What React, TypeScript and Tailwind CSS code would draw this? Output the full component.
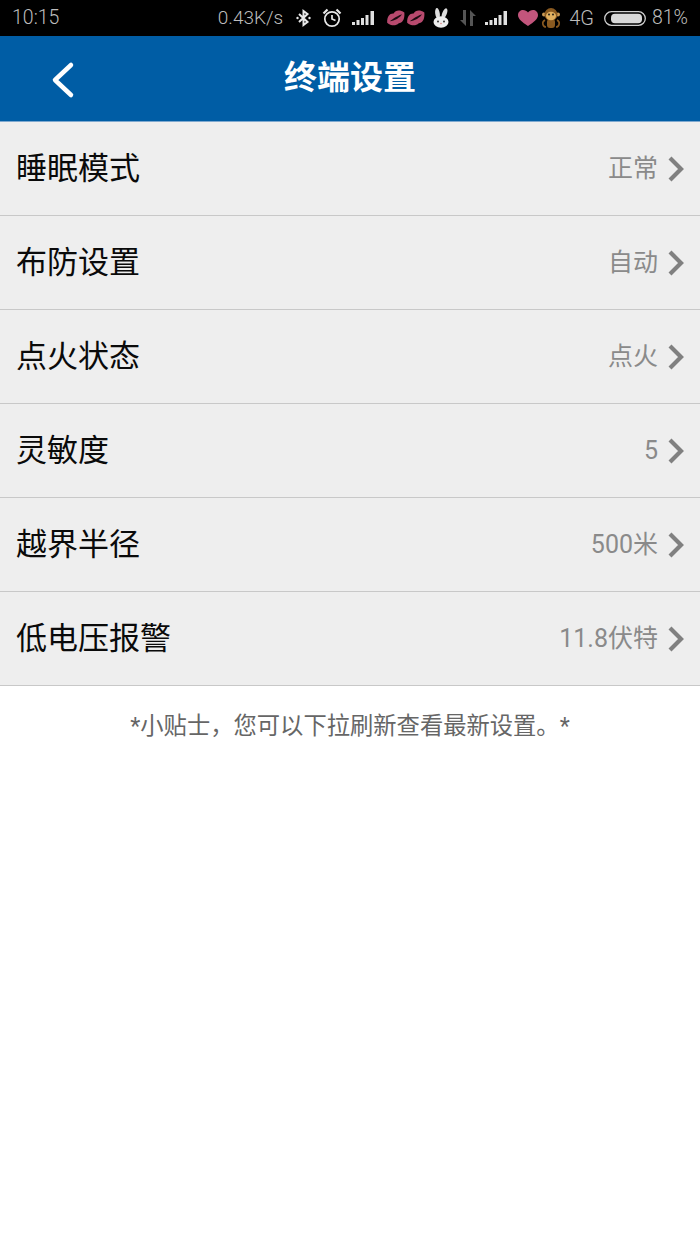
const cjk = { fontFamily: 'Roboto, "Noto Sans CJK SC", sans-serif' };

const rows = [
  { label: "睡眠模式", value: "正常" },
  { label: "布防设置", value: "自动" },
  { label: "点火状态", value: "点火" },
  { label: "灵敏度", value: "5" },
  { label: "越界半径", value: "500米" },
  { label: "低电压报警", value: "11.8伏特" },
];

function Signal() {
  return (
    <svg className="block" width="22" height="14" viewBox="0 0 22 14" fill="#e0e0e0">
      <rect x="0" y="11" width="3" height="3" />
      <rect x="4.500" y="9" width="3" height="5" />
      <rect x="9" y="7" width="3" height="7" />
      <rect x="13.500" y="4" width="3" height="10" />
      <rect x="18.500" y="0" width="3.500" height="14" />
    </svg>
  );
}

function Kiss() {
  return (
    <svg className="block" width="20" height="18" viewBox="0 0 20 18">
      <g transform="rotate(-28 10 9)">
        <path d="M0 9 C3 3 7 2 10 4 C13 2 17 3 20 8 C17 15 13 16 10 15 C6 16 2 14 0 9 Z" fill="#b84a6e" />
        <path d="M3 9 C7 8 14 8 17 8.500 C14 10.500 7 11 3 9 Z" fill="#1a0a10" />
      </g>
    </svg>
  );
}

function Rabbit() {
  return (
    <svg className="block" width="18" height="20" viewBox="0 0 18 20">
      <ellipse cx="5.500" cy="5.500" rx="2.300" ry="5.500" fill="#dddddd" transform="rotate(-8 5.500 5.500)" />
      <ellipse cx="12.500" cy="5.500" rx="2.300" ry="5.500" fill="#dddddd" transform="rotate(22 12.500 5.500)" />
      <ellipse cx="9" cy="14" rx="7.500" ry="5.800" fill="#eeeeee" />
      <circle cx="6" cy="13.500" r="0.900" fill="#222" />
      <circle cx="12" cy="13.500" r="0.900" fill="#222" />
      <circle cx="9" cy="15.500" r="0.800" fill="#d88" />
    </svg>
  );
}

function Monkey() {
  return (
    <svg className="block" width="20" height="20" viewBox="0 0 20 20">
      <path d="M4 12 C0 14 2 19 5 19 M16 12 C20 14 18 19 15 19" stroke="#8a5a20" strokeWidth="1.600" fill="none" />
      <rect x="6" y="11" width="8" height="9" rx="3" fill="#8a5a20" />
      <circle cx="3" cy="6.500" r="2" fill="#c99a55" />
      <circle cx="17" cy="6.500" r="2" fill="#c99a55" />
      <circle cx="10" cy="6.500" r="6.500" fill="#8a5a20" />
      <ellipse cx="10" cy="8" rx="5" ry="4.200" fill="#e0b060" />
      <circle cx="8" cy="6.500" r="0.900" fill="#111" />
      <circle cx="12" cy="6.500" r="0.900" fill="#111" />
    </svg>
  );
}

function StatusBar() {
  return (
    <div className="h-9 bg-black flex items-center justify-between pl-3 pr-3 text-[19.500px] font-light text-[#bdbdbd]" style={{ fontFamily: "Roboto, sans-serif" }}>
      <span>10:15</span>
      <div className="flex items-center">
        <span className="text-[19px]">0.43K/s</span>
        <svg className="ml-[13px]" width="15" height="18" viewBox="0 0 15 18" fill="none" stroke="#e8e8e8" strokeWidth="2">
          <path d="M3 5 L11.500 13 L7.500 16 V2 L11.500 5 L3 13" />
          <circle cx="1.500" cy="9" r="1.200" fill="#e8e8e8" stroke="none" />
          <circle cx="13.500" cy="9" r="1.200" fill="#e8e8e8" stroke="none" />
        </svg>
        <svg className="ml-[11px]" width="20" height="20" viewBox="0 0 20 20" fill="none" stroke="#e8e8e8" strokeWidth="1.700">
          <circle cx="10" cy="11" r="7.200" />
          <path d="M10 7 V11 L13.500 12.500" />
          <path d="M1.500 5.500 L5.500 1.500 M14.500 1.500 L18.500 5.500" strokeWidth="2.200" />
        </svg>
        <div className="ml-[10px]"><Signal /></div>
        <div className="ml-[12px] flex items-center"><Kiss /><Kiss /></div>
        <div className="ml-[6px]"><Rabbit /></div>
        <svg className="ml-[10px]" width="16" height="16" viewBox="0 0 16 16" fill="#555555">
          <path d="M3 0 H6 V16 L0 10 H3 Z" />
          <path d="M10 16 H13 V6 H16 L10 0 Z" />
        </svg>
        <div className="ml-[9px]"><Signal /></div>
        <svg className="ml-[11px]" width="20" height="16" viewBox="0 0 20 16" fill="#c2557c">
          <path d="M10 16 C4 12 0 9 0 5 C0 2 2.500 0 5 0 C7 0 9 1 10 2.500 C11 1 13 0 15 0 C17.500 0 20 2 20 5 C20 9 16 12 10 16 Z" />
        </svg>
        <div className="ml-[3px]"><Monkey /></div>
        <span className="ml-[8px] text-[20px]">4G</span>
        <svg className="ml-[10px]" width="42" height="15" viewBox="0 0 42 15">
          <rect x="0.700" y="0.700" width="40.600" height="13.600" rx="6.800" fill="none" stroke="#cfcfcf" strokeWidth="1.300" />
          <rect x="7" y="2.800" width="31" height="9.400" rx="4" fill="#d8d8d8" />
        </svg>
        <span className="ml-[6px]">81%</span>
      </div>
    </div>
  );
}

function Row({ label, value }: { label: string; value: string }) {
  return (
    <div className="h-[94px] bg-[#eeeeee] border-b border-[#c8c8c8] flex items-center pl-4 pr-[15px]">
      <span className="text-[31px] text-[#0a0a0a] flex-1 leading-[40px] mt-[1px]" style={cjk}>{label}</span>
      <span className="text-[25px] text-[#8a8a8a] leading-[32px] mt-[1px]" style={cjk}>{value}</span>
      <svg className="ml-[9px] mt-[2px]" width="18" height="28" viewBox="0 0 18 28" fill="none" stroke="#808080" strokeWidth="4.200">
        <path d="M3 2 L14 13 L3 24" />
      </svg>
    </div>
  );
}

export default function App() {
  return (
    <div className="w-[700px] h-[1244px] bg-white overflow-hidden" style={cjk}>
      <StatusBar />
      <header className="h-[86px] bg-[#005da5] border-b border-[#7fa9cf] flex items-center justify-center relative">
        <svg className="absolute left-[51px] top-[25px]" width="24" height="38" viewBox="0 0 24 38" fill="none" stroke="white" strokeWidth="4.500" strokeLinecap="round" strokeLinejoin="round">
          <path d="M20 4 L4 19 L20 34" />
        </svg>
        <h1 className="text-[33px] font-bold text-white leading-[40px] mb-[1px]">终端设置</h1>
      </header>
      <div>
        {rows.map((r) => (
          <Row key={r.label} label={r.label} value={r.value} />
        ))}
      </div>
      <p className="text-center text-[23.300px] leading-[32px] text-[#666666] mt-[24px]">*小贴士，您可以下拉刷新查看最新设置。*</p>
    </div>
  );
}
